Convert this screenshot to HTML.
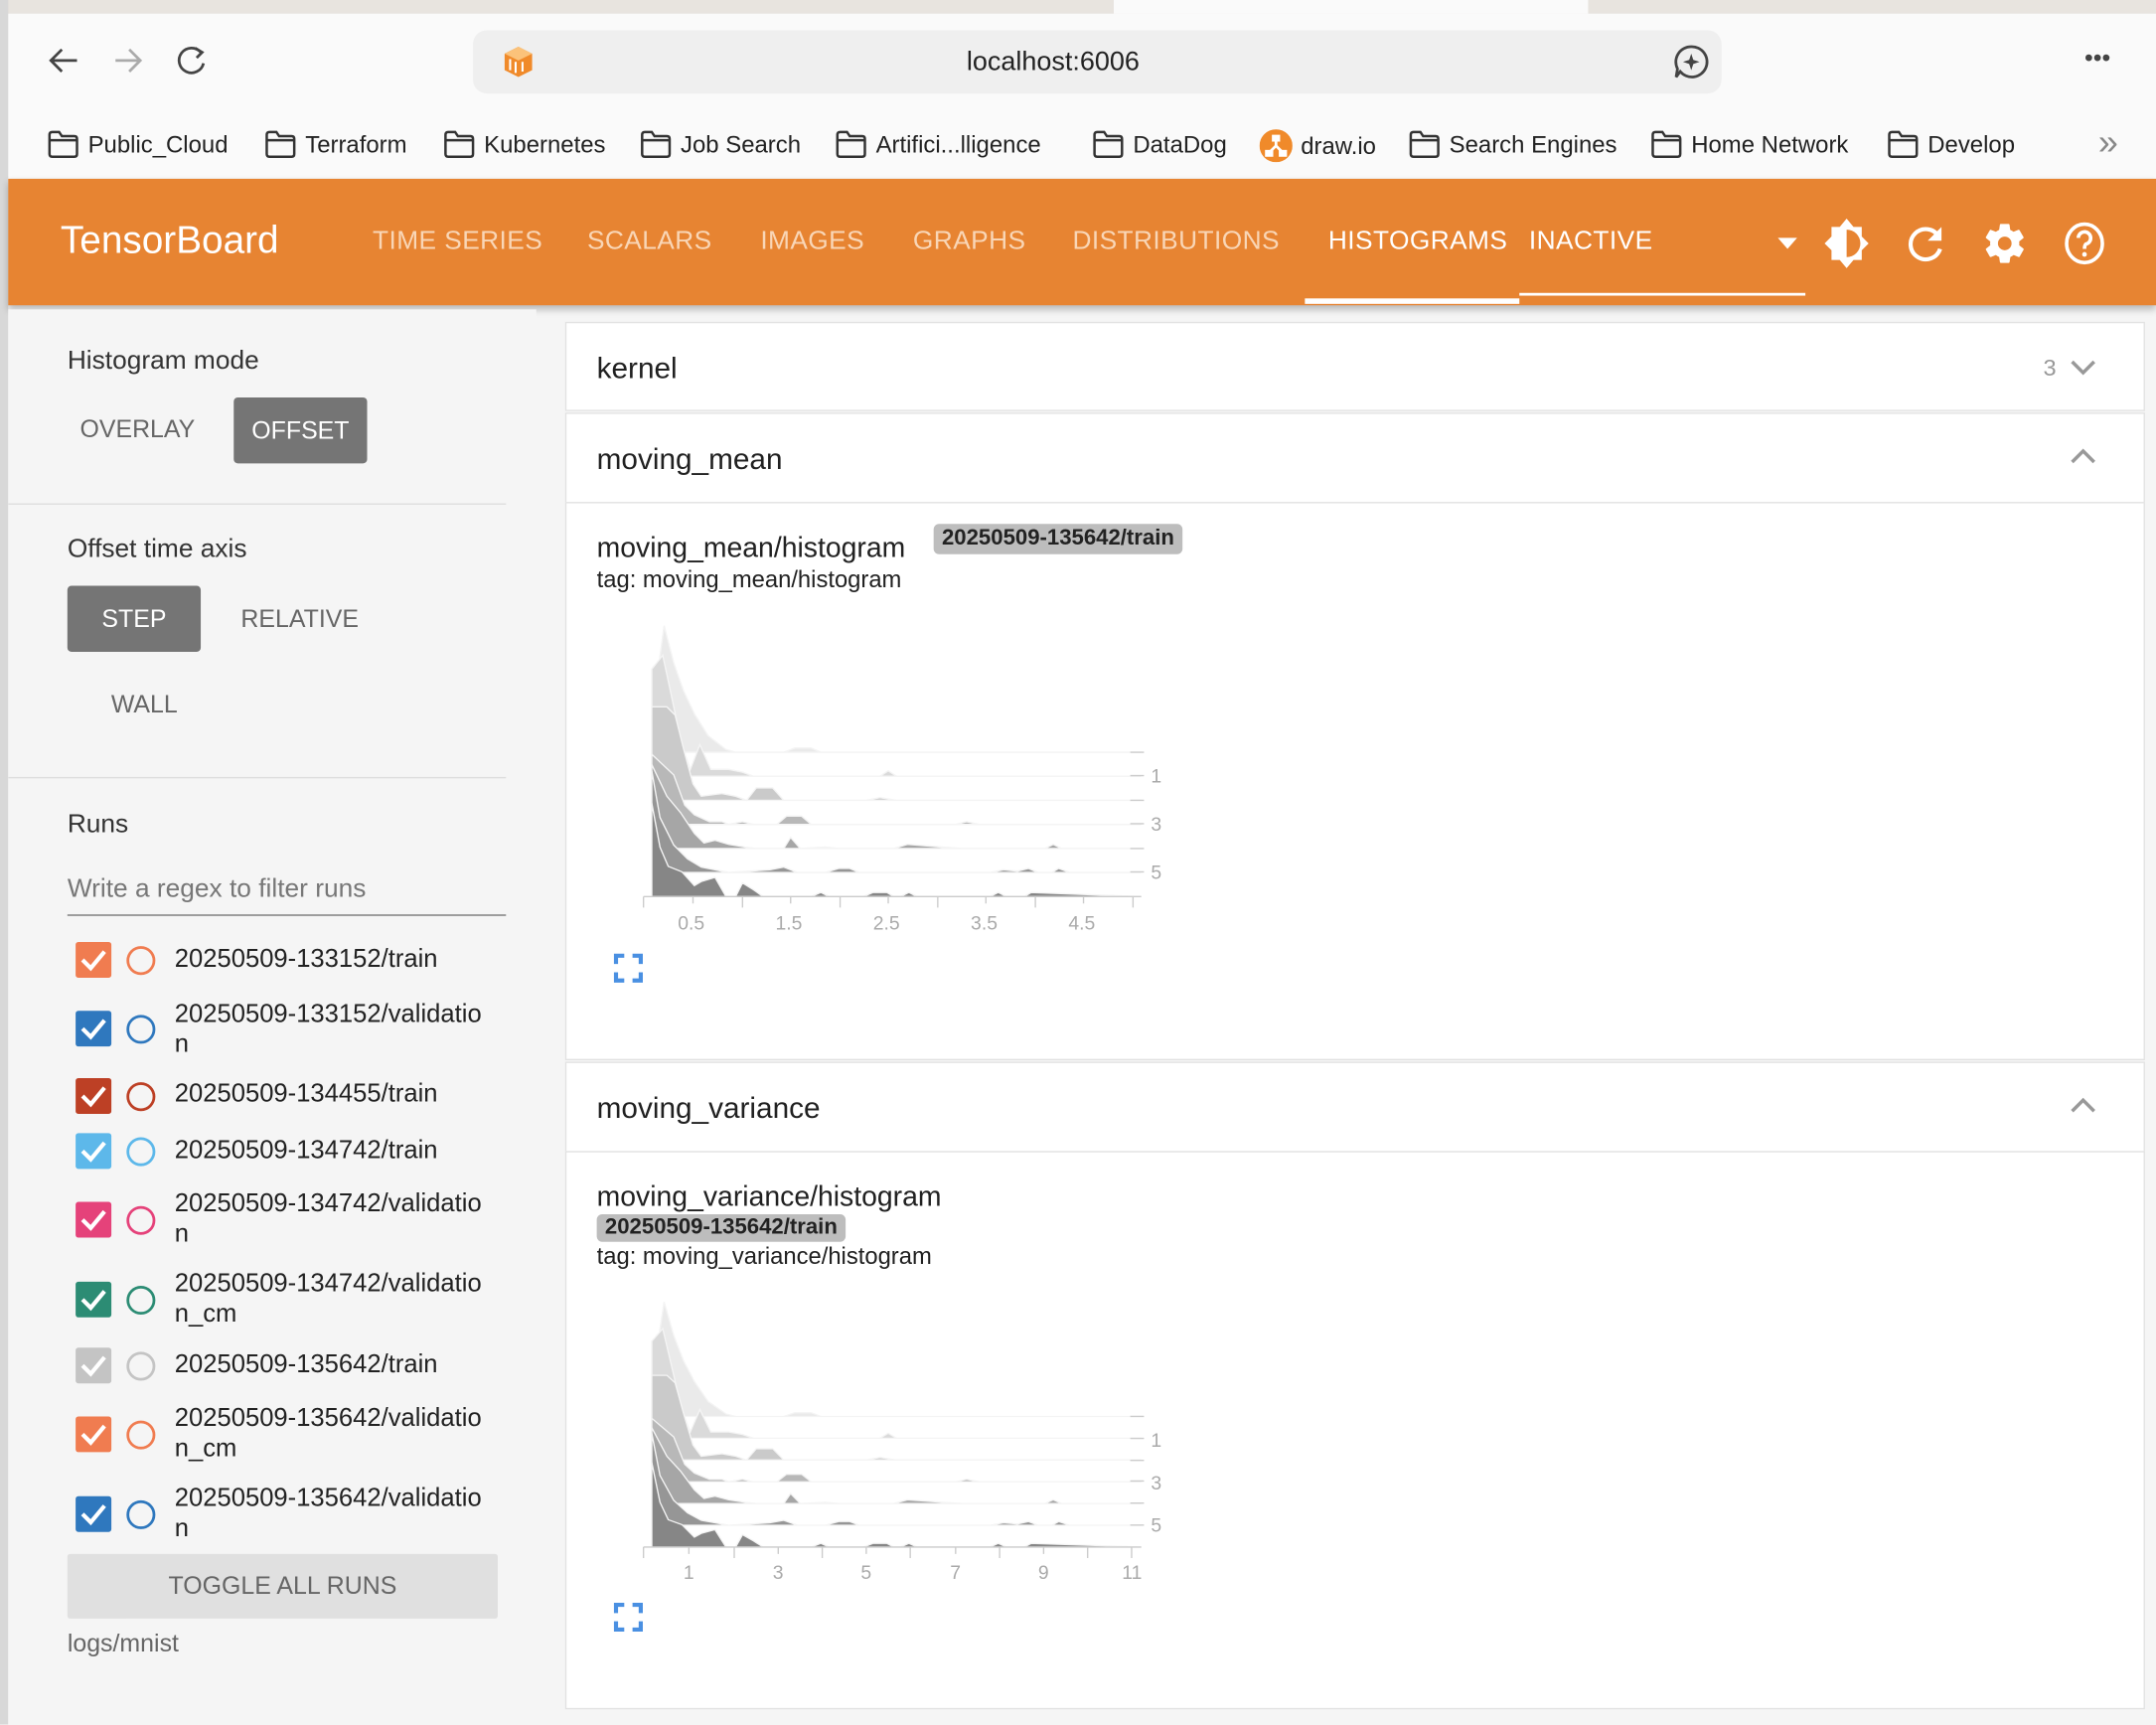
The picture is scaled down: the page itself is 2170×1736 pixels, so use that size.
<!DOCTYPE html>
<html><head><meta charset="utf-8">
<style>
*{margin:0;padding:0;box-sizing:border-box}
html,body{width:2170px;height:1736px;overflow:hidden;background:#f5f5f5}
#w{position:absolute;left:0;top:0;width:1568px;height:1254px;transform:scale(1.38393);transform-origin:0 0;font-family:"Liberation Sans",sans-serif;color:#212121}
.a{position:absolute}
.bm{position:absolute;top:94px;font-size:17.3px;color:#222;display:flex;align-items:center;gap:6px;white-space:nowrap}
.nav{position:absolute;top:165px;font-size:19px;color:#f9d6b6;letter-spacing:.3px}
.lbl{position:absolute;font-size:19px;color:#333}
.btn{position:absolute;font-size:18px;color:#666;text-align:center}
.run{position:absolute;left:127px;font-size:18.5px;color:#222;line-height:22px}
.cb{position:absolute;left:55px;width:26px;height:26px;border-radius:2px}
.cb svg{position:absolute;left:3px;top:4px}
.rc{position:absolute;left:92px;width:21px;height:21px;border-radius:50%;border:2px solid}
.card{position:absolute;left:411px;width:1149px;background:#fff;border:1px solid #e2e2e2}
.ct{position:absolute;left:22px;font-size:21.5px;color:#212121}
</style></head><body><div id="w">
<div class="a" style="left:0;top:0;width:1568px;height:10px;background:#e8e4df"></div>
<div class="a" style="left:810px;top:0;width:345px;height:10px;background:#fafafa"></div>
<div class="a" style="left:0;top:10px;width:1568px;height:120px;background:#fafafa"></div>
<div class="a" style="left:0;top:0;width:6px;height:1254px;background:#d8d8d8"></div>
<svg class="a" style="left:30px;top:30px" width="130" height="30" viewBox="0 0 130 30">
<path d="M26 14H7M15 6L7 14L15 22" stroke="#444" stroke-width="2" fill="none"/>
<path d="M54 14H72M64 6L72 14L64 22" stroke="#aaa" stroke-width="2" fill="none"/>
<path d="M116 8A9 9 0 1 0 118 16" stroke="#444" stroke-width="2" fill="none"/><path d="M112 5L117 8L113 12" stroke="#444" stroke-width="2" fill="none"/>
</svg>
<div class="a" style="left:344px;top:22px;width:908px;height:46px;background:#efefef;border-radius:10px"></div>
<svg class="a" style="left:366px;top:33px" width="22" height="24" viewBox="0 0 22 24"><path d="M11 1L21 6V18L11 23L1 18V6Z" fill="#f08a2a"/><path d="M11 1L21 6L11 11L1 6Z" fill="#fbc27a"/><path d="M5 10V18M9 12V20M14 12V19" stroke="#fff" stroke-width="1.5"/></svg>
<div class="a" style="left:703px;top:34px;font-size:19.5px;color:#222">localhost:6006</div>
<svg class="a" style="left:1217px;top:32px" width="26" height="26" viewBox="0 0 26 26"><path d="M13 2A11 11 0 1 1 5 20L2 24L3 18A11 11 0 0 1 13 2Z" stroke="#444" stroke-width="2" fill="none"/><path d="M13 7L14.5 11.5L19 13L14.5 14.5L13 19L11.5 14.5L7 13L11.5 11.5Z" fill="#444"/></svg>
<div class="a" style="left:1516px;top:32px;font-size:18px;color:#444;letter-spacing:0px">•••</div>
<svg width="0" height="0" style="position:absolute"><defs><symbol id="fd" viewBox="0 0 24 22"><path d="M2 4Q2 2 4 2H9L11 5H20Q22 5 22 7V18Q22 20 20 20H4Q2 20 2 18Z M2 8H22" stroke="#333" stroke-width="1.8" fill="none"/></symbol></defs></svg>
<div class="bm" style="left:34px"><svg width="24" height="22"><use href="#fd"/></svg>Public_Cloud</div>
<div class="bm" style="left:192px"><svg width="24" height="22"><use href="#fd"/></svg>Terraform</div>
<div class="bm" style="left:322px"><svg width="24" height="22"><use href="#fd"/></svg>Kubernetes</div>
<div class="bm" style="left:465px"><svg width="24" height="22"><use href="#fd"/></svg>Job Search</div>
<div class="bm" style="left:607px"><svg width="24" height="22"><use href="#fd"/></svg>Artifici...lligence</div>
<div class="bm" style="left:794px"><svg width="24" height="22"><use href="#fd"/></svg>DataDog</div>
<div class="bm" style="left:916px"><svg width="24" height="24" viewBox="0 0 24 24"><circle cx="12" cy="12" r="12" fill="#f08a2a"/><path d="M12 6V12M12 12L7 17M12 12L17 17" stroke="#fff" stroke-width="2"/><rect x="9" y="4" width="6" height="5" fill="#fff"/><rect x="4" y="15" width="6" height="5" fill="#fff"/><rect x="14" y="15" width="6" height="5" fill="#fff"/></svg>draw.io</div>
<div class="bm" style="left:1024px"><svg width="24" height="22"><use href="#fd"/></svg>Search Engines</div>
<div class="bm" style="left:1200px"><svg width="24" height="22"><use href="#fd"/></svg>Home Network</div>
<div class="bm" style="left:1372px"><svg width="24" height="22"><use href="#fd"/></svg>Develop</div>
<div class="a" style="left:1526px;top:88px;font-size:26px;color:#888">»</div>
<div class="a" style="left:6px;top:130px;width:1562px;height:92px;background:#e78432;box-shadow:0 3px 5px rgba(0,0,0,.25)"></div>
<div class="a" style="left:44px;top:159px;font-size:28px;color:#fff">TensorBoard</div>
<div class="nav" style="left:271px">TIME SERIES</div>
<div class="nav" style="left:427px">SCALARS</div>
<div class="nav" style="left:553px">IMAGES</div>
<div class="nav" style="left:664px">GRAPHS</div>
<div class="nav" style="left:780px">DISTRIBUTIONS</div>
<div class="nav" style="left:966px;color:#fff">HISTOGRAMS</div>
<div class="nav" style="left:1112px;color:#fff">INACTIVE</div>
<div class="a" style="left:949px;top:217px;width:156px;height:4px;background:#fff"></div>
<div class="a" style="left:1105px;top:213px;width:208px;height:2px;background:#fff"></div>
<svg class="a" style="left:1290px;top:170px" width="20" height="14"><path d="M3 3H17L10 11Z" fill="#fff"/></svg>
<svg class="a" style="left:1325px;top:158px" width="36" height="38" viewBox="0 0 36 38"><path d="M18 1L23 7H29V14L34 19L29 24V31H23L18 37L13 31H7V24L2 19L7 14V7H13Z" fill="#fff"/><path d="M18 9A10 10 0 0 1 18 29Z" fill="#e78432"/></svg>
<svg class="a" style="left:1386px;top:162px" width="30" height="30" viewBox="0 0 30 30"><path d="M24 10A11 11 0 1 0 25 19" stroke="#fff" stroke-width="3" fill="none"/><path d="M26 3V13H16Z" fill="#fff"/></svg>
<svg class="a" style="left:1441px;top:159px" width="34" height="36" viewBox="0 0 24 24"><path fill="#fff" d="M19.4 13c.04-.3.06-.65.06-1s-.02-.7-.07-1l2.1-1.650c.2-.15.24-.42.12-.64l-2-3.46c-.12-.22-.39-.3-.61-.22l-2.49 1c-.52-.4-1.080-.73-1.69-.98l-.38-2.65A.49.49 0 0 0 14 2h-4c-.25 0-.46.18-.49.42l-.38 2.65c-.61.25-1.17.59-1.69.98l-2.49-1c-.23-.09-.49 0-.61.22l-2 3.46c-.13.22-.07.49.12.64L4.57 11c-.04.3-.07.66-.07 1s.02.7.07 1l-2.11 1.65c-.19.15-.24.42-.12.64l2 3.46c.12.22.39.3.61.22l2.49-1c.52.4 1.08.73 1.69.98l.38 2.65c.03.24.24.42.49.42h4c.25 0 .46-.18.49-.42l.38-2.65c.61-.25 1.17-.59 1.69-.98l2.49 1c.23.09.49 0 .61-.22l2-3.46c.12-.22.07-.49-.12-.64L19.4 13zM12 15.5A3.5 3.5 0 1 1 12 8.5a3.5 3.5 0 0 1 0 7z"/></svg>
<svg class="a" style="left:1500px;top:160px" width="32" height="34" viewBox="0 0 32 34"><ellipse cx="16" cy="17" rx="13" ry="14" stroke="#fff" stroke-width="2.6" fill="none"/><path d="M11.5 13A4.5 4.5 0 1 1 17 17.5Q16 18.5 16 21" stroke="#fff" stroke-width="2.6" fill="none"/><circle cx="16" cy="25" r="1.7" fill="#fff"/></svg>
<div class="a" style="left:6px;top:225px;width:384px;height:1029px;background:#f5f5f5"></div>
<div class="lbl" style="left:49px;top:252px">Histogram mode</div>
<div class="btn" style="left:50px;top:302px;width:100px">OVERLAY</div>
<div class="btn" style="left:170px;top:289px;width:97px;height:48px;line-height:48px;background:#757575;color:#fff;border-radius:3px">OFFSET</div>
<div class="a" style="left:6px;top:366px;width:362px;height:1px;background:#ddd"></div>
<div class="lbl" style="left:49px;top:389px">Offset time axis</div>
<div class="btn" style="left:49px;top:426px;width:97px;height:48px;line-height:48px;background:#757575;color:#fff;border-radius:3px">STEP</div>
<div class="btn" style="left:166px;top:440px;width:104px">RELATIVE</div>
<div class="btn" style="left:70px;top:502px;width:70px">WALL</div>
<div class="a" style="left:6px;top:565px;width:362px;height:1px;background:#ddd"></div>
<div class="lbl" style="left:49px;top:589px">Runs</div>
<div class="a" style="left:49px;top:636px;font-size:19px;color:#777">Write a regex to filter runs</div>
<div class="a" style="left:49px;top:665px;width:319px;height:1px;background:#777"></div>
<svg width="0" height="0" style="position:absolute"><defs><symbol id="ck" viewBox="0 0 20 18"><path d="M2 9L8 15L18 3" stroke="#fff" stroke-width="3" fill="none"/></symbol></defs></svg>
<div class="cb" style="top:685px;background:#f07c50"><svg width="20" height="18"><use href="#ck"/></svg></div><div class="rc" style="top:688px;border-color:#f07c50"></div><div class="run" style="top:686px">20250509-133152/train</div>
<div class="cb" style="top:735px;background:#2f78be"><svg width="20" height="18"><use href="#ck"/></svg></div><div class="rc" style="top:738px;border-color:#2f78be"></div><div class="run" style="top:726px">20250509-133152/validatio<br>n</div>
<div class="cb" style="top:784px;background:#bd4025"><svg width="20" height="18"><use href="#ck"/></svg></div><div class="rc" style="top:787px;border-color:#bd4025"></div><div class="run" style="top:784px">20250509-134455/train</div>
<div class="cb" style="top:824px;background:#5db8ea"><svg width="20" height="18"><use href="#ck"/></svg></div><div class="rc" style="top:827px;border-color:#5db8ea"></div><div class="run" style="top:825px">20250509-134742/train</div>
<div class="cb" style="top:874px;background:#e5427a"><svg width="20" height="18"><use href="#ck"/></svg></div><div class="rc" style="top:877px;border-color:#e5427a"></div><div class="run" style="top:864px">20250509-134742/validatio<br>n</div>
<div class="cb" style="top:932px;background:#2c8c74"><svg width="20" height="18"><use href="#ck"/></svg></div><div class="rc" style="top:935px;border-color:#2c8c74"></div><div class="run" style="top:922px">20250509-134742/validatio<br>n_cm</div>
<div class="cb" style="top:980px;background:#c4c4c4"><svg width="20" height="18"><use href="#ck"/></svg></div><div class="rc" style="top:983px;border-color:#c4c4c4"></div><div class="run" style="top:981px">20250509-135642/train</div>
<div class="cb" style="top:1030px;background:#f07c50"><svg width="20" height="18"><use href="#ck"/></svg></div><div class="rc" style="top:1033px;border-color:#f07c50"></div><div class="run" style="top:1020px">20250509-135642/validatio<br>n_cm</div>
<div class="cb" style="top:1088px;background:#2f78be"><svg width="20" height="18"><use href="#ck"/></svg></div><div class="rc" style="top:1091px;border-color:#2f78be"></div><div class="run" style="top:1078px">20250509-135642/validatio<br>n</div>
<div class="btn" style="left:49px;top:1130px;width:313px;height:47px;line-height:47px;background:#e0e0e0;border-radius:2px">TOGGLE ALL RUNS</div>
<div class="a" style="left:49px;top:1185px;font-size:18px;color:#666">logs/mnist</div>
<div class="card" style="top:234px;height:65px"><div class="ct" style="top:21px">kernel</div><div class="a" style="left:1074px;top:23px;font-size:17px;color:#999">3</div><svg class="a" style="left:1093px;top:25px" width="20" height="14"><path d="M2 3L10 11L18 3" stroke="#999" stroke-width="2.5" fill="none"/></svg></div>
<div class="card" style="top:300px;height:66px"><div class="ct" style="top:21px">moving_mean</div><svg class="a" style="left:1093px;top:24px" width="20" height="14"><path d="M2 11L10 3L18 11" stroke="#999" stroke-width="2.5" fill="none"/></svg></div>
<div class="card" style="top:365px;height:406px"></div>
<div class="a" style="left:434px;top:387px;font-size:20.5px">moving_mean/histogram</div>
<div class="a" style="left:434px;top:411px;font-size:17.2px">tag: moving_mean/histogram</div>
<div class="a" style="left:679px;top:381px;padding:2px 6px;background:#bdbdbd;border-radius:4px;font-size:16px;font-weight:bold;color:#222">20250509-135642/train</div>
<div class="card" style="top:772px;height:66px"><div class="ct" style="top:21px">moving_variance</div><svg class="a" style="left:1093px;top:24px" width="20" height="14"><path d="M2 11L10 3L18 11" stroke="#999" stroke-width="2.5" fill="none"/></svg></div>
<div class="card" style="top:837px;height:406px"></div>
<div class="a" style="left:434px;top:859px;font-size:20.5px">moving_variance/histogram</div>
<div class="a" style="left:434px;top:883px;padding:1px 6px;background:#bdbdbd;border-radius:4px;font-size:16px;font-weight:bold;color:#222">20250509-135642/train</div>
<div class="a" style="left:434px;top:903px;font-size:17.2px">tag: moving_variance/histogram</div>
<svg class="a" style="left:0;top:0" width="1568" height="1254">
<defs>
<g id="rid">
<polygon transform="translate(0,0)" fill="#eaeaea" points="474,0 474,-27 483,-92 490,-65 497,-45 505,-28 515,-12 528,-2 535,0 570,0 578,-3 590,-3 597,0 830,0"/>
<polygon transform="translate(0,17.5)" fill="#dadada" points="474,0 474,-78 482,-88 488,-60 496,-22 502,-5 509,-23 517,-5 530,-5 540,-3 548,0 640,0 646,-4 652,0 830,0"/>
<polygon transform="translate(0,35)" fill="#cacaca" points="474,0 474,-68 485,-68 491,-62 497,-38 504,-12 510,-3 525,-5 535,-3 543,0 550,-9 562,-9 570,0 630,0 640,-2 652,0 830,0"/>
<polygon transform="translate(0,52.5)" fill="#b8b8b8" points="474,0 474,-51 490,-36 498,-14 505,-7 516,-2 525,-2 530,0 540,-2 548,0 565,0 572,-6 583,-6 590,0 695,0 703,-2 712,0 830,0"/>
<polygon transform="translate(0,70)" fill="#a6a6a6" points="474,0 474,-61 485,-38 495,-26 505,-11 512,-4 520,-6 530,-3 542,-1 550,0 570,0 575,-8 582,0 600,-1 610,0 650,0 660,-3 685,-1 700,0 760,0 766,-3 772,0 830,0"/>
<polygon transform="translate(0,87.5)" fill="#969696" points="474,0 474,-74 480,-40 490,-20 500,-10 510,-4 520,-2 530,0 545,-1 560,-2 570,-4 580,0 600,0 610,-3 618,-3 625,0 720,0 730,-2 740,-1 748,-3 755,0 765,0 770,-3 778,0 830,0"/>
<polygon transform="translate(0,105)" fill="#868686" points="474,0 474,-68 480,-36 486,-22 496,-18 505,-8 510,-11 520,-14 528,0 535,0 540,-10 548,-5 555,0 590,0 597,-3 603,0 628,0 635,-3 645,-3 650,0 655,0 661,-3 667,0 720,0 726,-3 732,0 745,0 750,-3 830,0"/>
</g>
</defs>
<g stroke="#f4f4f4" stroke-width="1"><use href="#rid" transform="translate(0,547)"/></g>
<g stroke="#f4f4f4" stroke-width="1"><use href="#rid" transform="translate(0,1030) scale(1,0.905)"/></g>
<g stroke="#ccc" stroke-width="1" fill="none">
<path d="M468 652H830M468 652V660M540 652V660M611 652V660M682 652V660M753 652V660M824 652V660M504 652V657M575 652V657M646 652V657M717 652V657M788 652V657"/>
<path d="M822 564H832M822 599H832M822 634H832M822 547H832M822 582H832M822 617H832"/>
<path d="M468 1125H830M468 1125V1133M534 1125V1133M598 1125V1133M662 1125V1133M727 1125V1133M791 1125V1133M501 1125V1130M566 1125V1130M630 1125V1130M695 1125V1130M759 1125V1130M823 1125V1133"/>
<path d="M822 1030H832M822 1046H832M822 1062H832M822 1077H832M822 1093H832M822 1109H832"/>
</g>
<g font-family="Liberation Sans,sans-serif" font-size="14" fill="#aaa">
<text x="493" y="676">0.5</text><text x="564" y="676">1.5</text><text x="635" y="676">2.5</text><text x="706" y="676">3.5</text><text x="777" y="676">4.5</text>
<text x="837" y="569">1</text><text x="837" y="604">3</text><text x="837" y="639">5</text>
<text x="497" y="1148">1</text><text x="562" y="1148">3</text><text x="626" y="1148">5</text><text x="691" y="1148">7</text><text x="755" y="1148">9</text><text x="816" y="1148">11</text>
<text x="837" y="1052">1</text><text x="837" y="1083">3</text><text x="837" y="1114">5</text>
</g>
<g stroke="#4a90e2" stroke-width="3" fill="none">
<path d="M448 701V695H454M460 695H466V701M466 707V713H460M454 713H448V707"/>
<path d="M448 1173V1167H454M460 1167H466V1173M466 1179V1185H460M454 1185H448V1179"/>
</g>
</svg>
</div></body></html>
